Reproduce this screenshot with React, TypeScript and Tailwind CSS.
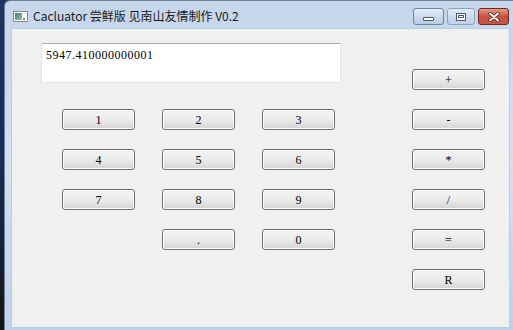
import React from "react";

const serif = { fontFamily: '"Liberation Serif", "Noto Sans CJK SC", serif' };

const Key = ({ label }: { label: string }) => (
  <button
    className="w-[73px] h-[21px] rounded-[3px] border border-[#707070] bg-gradient-to-b from-[#f3f3f3] via-[#ebebeb] to-[#d5d5d5] text-[12px] leading-none text-black flex items-center justify-center shadow-[inset_0_0_0_1px_#fcfcfc]"
    style={serif}
  >
    {label}
  </button>
);

const TitleIcon = () => (
  <div className="w-[15px] h-[11px] border border-[#8a8a8a] bg-white flex items-center pl-[1px] gap-[1px]">
    <div className="w-[7px] h-[7px] bg-gradient-to-br from-[#3e7a6a] to-[#9fc1b0]" />
    <div className="w-[3px] h-[7px] flex flex-col justify-end">
      <div className="w-[2px] h-[2px] bg-[#6aa06a]" />
    </div>
  </div>
);

const CaptionButtons = () => (
  <div className="flex gap-[3px] items-start">
    <div className="w-[31px] h-[17px] rounded-[3px] border border-[#6f829f] bg-gradient-to-b from-[#e6eef9] via-[#cad9ee] to-[#b7cae6] flex items-center justify-center">
      <div className="w-[11px] h-[4px] bg-white border border-[#4b5a70] rounded-[1px] mt-[5px]" />
    </div>
    <div className="w-[28px] h-[17px] rounded-[3px] border border-[#8fa3c0] bg-gradient-to-b from-[#e2ebf7] via-[#cddcef] to-[#bfd0e8] flex items-center justify-center">
      <div className="w-[10px] h-[8px] border border-[#4b5a70] bg-white flex items-center justify-center">
        <div className="w-[6px] h-[3px] border border-[#4b5a70]" />
      </div>
    </div>
    <div className="w-[31px] h-[17px] rounded-[3px] border border-[#6b2a26] bg-gradient-to-b from-[#e49a86] via-[#c9503e] to-[#c8563f] flex items-center justify-center">
      <svg width="12" height="10" viewBox="0 0 12 10">
        <path d="M2 1.5 L10 8.5 M10 1.5 L2 8.5" stroke="#3b1d1a" strokeWidth="3.4" strokeLinecap="round" />
        <path d="M2 1.5 L10 8.5 M10 1.5 L2 8.5" stroke="#ffffff" strokeWidth="2" strokeLinecap="round" />
      </svg>
    </div>
  </div>
);

export default function App() {
  const digits = ["1", "2", "3", "4", "5", "6", "7", "8", "9"];
  const ops = ["+", "-", "*", "/", "=", "R"];

  return (
    <div className="w-[513px] h-[330px] overflow-hidden flex bg-gradient-to-b from-[#1d3566] via-[#1a2c55] to-[#141414]">
      <div className="w-[4px] shrink-0" />
      <div className="flex-1 flex flex-col rounded-tl-[6px] bg-gradient-to-b from-[#c5d6ec] via-[#d3e0f0] to-[#bcd2ec] border-l border-t border-[#6d7f99]">
        <div className="h-[27px] flex items-start pl-[8px] pr-[4px]">
          <div className="pt-[10px]">
            <TitleIcon />
          </div>
          <div
            className="ml-[5px] pt-[7px] text-[12px] leading-[16px] text-[#1a1a1a]"
            style={{ fontFamily: '"Noto Sans CJK SC", "Noto Sans", sans-serif' }}
          >
            Cacluator 尝鲜版 见南山友情制作 V0.2
          </div>
          <div className="ml-auto pt-[7px]">
            <CaptionButtons />
          </div>
        </div>
        <div className="flex-1 flex pl-[6px] pr-[3px] pb-[2px]">
          <div className="flex-1 bg-[#f0f0f0] border border-[#b8cde6] flex pl-[29px] pt-[14px]">
            <div className="flex flex-col">
              <div
                className="w-[300px] h-[40px] bg-white border border-[#e2e3ea] border-t-[#abadb3] pl-[4px] pt-[4px] text-[12px] leading-[14px] tracking-[0.5px] text-black"
                style={serif}
              >
                5947.410000000001
              </div>
              <div className="mt-[26px] ml-[21px] grid grid-cols-[73px_73px_73px] gap-x-[27px] gap-y-[19px]">
                {digits.map((d) => (
                  <Key key={d} label={d} />
                ))}
                <div />
                <Key label="." />
                <Key label="0" />
              </div>
            </div>
            <div className="ml-[71px] pt-[26px] flex flex-col gap-[19px]">
              {ops.map((o) => (
                <Key key={o} label={o} />
              ))}
            </div>
          </div>
        </div>
      </div>
    </div>
  );
}
